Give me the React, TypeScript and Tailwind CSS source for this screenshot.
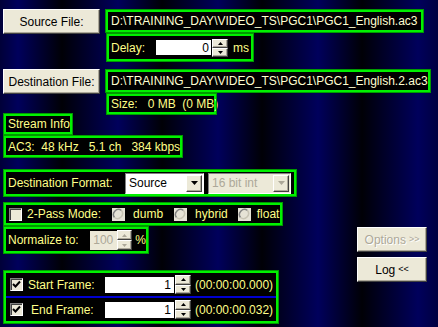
import type { ReactNode } from "react"

const box = "border-[3px] border-[#00f000] outline outline-[#009a00] outline-offset-[-1px] bg-black whitespace-nowrap"
const label = "text-[#ffff88]"
const raised =
  "bg-[#ece9d8] border border-t-white border-l-white border-r-[#404040] border-b-[#404040] shadow-[inset_-1px_-1px_0_#aca899]"

function Button({ children, disabled, className }: { children: ReactNode; disabled?: boolean; className?: string }) {
  return (
    <div
      className={`${raised} flex items-center justify-center h-[25px] whitespace-nowrap ${
        disabled ? "text-[#aca899] [text-shadow:1px_1px_0_#fff]" : "text-black"
      } ${className ?? ""}`}
    >
      {children}
    </div>
  )
}

function Tri({ gray }: { gray?: boolean }) {
  return (
    <svg width="7" height="4" viewBox="0 0 7 4">
      <path d="M0 0 L7 0 L3.5 4 Z" fill={gray ? "#aca899" : "#000"} />
    </svg>
  )
}

function Spin({ gray, h = 18 }: { gray?: boolean; h?: number }) {
  return (
    <div className="flex flex-col w-[16px]" style={{ height: h }}>
      <div className={`${raised} flex-1 flex items-center justify-center`}>
        <svg width="5" height="3" viewBox="0 0 5 3">
          <path d="M2.5 0 L5 3 L0 3 Z" fill={gray ? "#aca899" : "#000"} />
        </svg>
      </div>
      <div className={`${raised} flex-1 flex items-center justify-center`}>
        <svg width="5" height="3" viewBox="0 0 5 3">
          <path d="M0 0 L5 0 L2.5 3 Z" fill={gray ? "#aca899" : "#000"} />
        </svg>
      </div>
    </div>
  )
}

function Check({ checked }: { checked?: boolean }) {
  return (
    <div className="shrink-0 w-[13px] h-[13px] bg-[#ece9d8] border border-t-[#808080] border-l-[#808080] border-r-white border-b-white shadow-[inset_1px_1px_0_#404040] flex items-center justify-center">
      {checked && (
        <svg width="9" height="9" viewBox="0 0 9 9">
          <path d="M1 4 L3.5 6.5 L8 1.5" stroke="#000" strokeWidth="2" fill="none" />
        </svg>
      )}
    </div>
  )
}

function Radio() {
  return (
    <svg width="13" height="13" viewBox="0 0 13 13" className="block">
      <rect x="0" y="0" width="13" height="13" fill="#e6e3d6" />
      <path d="M9.5 2.5 A5 5 0 0 0 2.5 9.5" stroke="#808080" strokeWidth="1.5" fill="none" />
      <path d="M2.5 9.5 A5 5 0 0 0 9.5 2.5" stroke="#c8c4b4" strokeWidth="1.5" fill="none" />
    </svg>
  )
}

function Select({ value, disabled, w }: { value: string; disabled?: boolean; w: number }) {
  return (
    <div
      className={`flex items-center h-[21px] border border-t-[#808080] border-l-[#808080] border-r-white border-b-white ${
        disabled ? "bg-[#ece9d8] text-[#aca899]" : "bg-white text-black"
      }`}
      style={{ width: w }}
    >
      <span className="flex-1 pl-[3px]">{value}</span>
      <div className={`${raised} w-[16px] h-[17px] mr-[1px] flex items-center justify-center`}>
        <Tri gray={disabled} />
      </div>
    </div>
  )
}

export default function App() {
  return (
    <div
      className="w-[438px] h-[327px] overflow-hidden flex flex-col pl-[3px] text-[12px] leading-none bg-[linear-gradient(90deg,#000038_0px,#00005c_18px,#000006_62px,#00005c_118px,#000006_162px,#00005c_218px,#000006_262px,#00005c_318px,#000006_362px,#00005c_418px,#000040_438px)]"
      style={{ fontFamily: '"Liberation Sans", Arial, sans-serif' }}
    >
      {/* source */}
      <div className="flex items-start mt-[9px]">
        <Button className="w-[97px]">Source File:</Button>
        <div className="flex flex-col items-start ml-[5px]">
          <div className={`${box} w-[319px] h-[24px] flex items-center pl-[3px] text-[#ffffd0]`}>
            D:\TRAINING_DAY\VIDEO_TS\PGC1\PGC1_English.ac3
          </div>
          <div className={`${box} ml-[1px] w-[148px] h-[29px] flex items-center pl-[2px]`}>
            <span className={label}>Delay:</span>
            <div className="ml-[11px] w-[55px] h-[15px] bg-white flex items-center justify-end pr-[2px] text-black">0</div>
            <div className="ml-[1px]">
              <Spin />
            </div>
            <span className={`${label} ml-[5px]`}>ms</span>
          </div>
        </div>
      </div>

      {/* destination */}
      <div className="flex items-start mt-[7px]">
        <Button className="w-[97px]">Destination File:</Button>
        <div className="flex flex-col items-start ml-[5px]">
          <div className={`${box} w-[326px] h-[24px] flex items-center pl-[3px] text-[#ffffd0]`}>
            D:\TRAINING_DAY\VIDEO_TS\PGC1\PGC1_English.2.ac3
          </div>
          <div className={`${box} ml-[1px] w-[111px] h-[22px] flex items-center pl-[2px] whitespace-pre ${label}`}>
            {"Size:   0 MB  (0 MB)"}
          </div>
        </div>
      </div>

      {/* stream info */}
      <div className={`${box} -mt-[2px] w-[70px] h-[22px] flex items-center pl-[2px] ${label}`}>Stream Info</div>
      <div className={`${box} w-[180px] h-[23px] flex items-center pl-[2px] whitespace-pre ${label}`}>
        {"AC3:  48 kHz   5.1 ch   384 kbps"}
      </div>

      {/* format */}
      <div className={`${box} mt-[11px] w-[294px] h-[28px] flex items-center pl-[2px]`}>
        <span className={`${label} w-[117px]`}>Destination Format:</span>
        <Select value="Source" w={79} />
        <div className="ml-[4px]">
          <Select value="16 bit int" w={83} disabled />
        </div>
      </div>

      <div className="flex items-start">
        <div className="flex flex-col items-start">
          {/* 2-pass */}
          <div className={`${box} mt-[5px] w-[280px] h-[24px] flex items-center pl-[3px] ${label}`}>
            <Check />
            <span className="ml-[5px]">2-Pass Mode:</span>
            <span className="ml-[11px]">
              <Radio />
            </span>
            <span className="ml-[8px]">dumb</span>
            <span className="ml-[11px]">
              <Radio />
            </span>
            <span className="ml-[8px]">hybrid</span>
            <span className="ml-[10px]">
              <Radio />
            </span>
            <span className="ml-[6px]">float</span>
          </div>

          {/* normalize */}
          <div className={`${box} w-[146px] h-[28px] flex items-center pl-[2px] ${label}`}>
            <span>Normalize to:</span>
            <div className="ml-[11px] w-[28px] h-[19px] bg-[#ece9d8] flex items-center justify-center text-[#aca899]">100</div>
            <Spin gray h={20} />
            <span className="ml-[3px]">%</span>
          </div>

          {/* frames */}
          <div className={`${box} mt-[16px] w-[276px] h-[54px] flex flex-col ${label}`}>
            <div className="h-[23px] flex items-center pl-[4px]">
              <Check checked />
              <span className="ml-[5px] w-[77px]">Start Frame:</span>
              <div className="w-[69px] h-[16px] bg-white flex items-center justify-end pr-[3px] text-black">1</div>
              <div className="ml-[1px]">
                <Spin h={19} />
              </div>
              <span className="ml-[4px]">(00:00:00.000)</span>
            </div>
            <div className="h-[2px] bg-[#0000d0]" />
            <div className="h-[23px] flex items-center pl-[4px]">
              <Check checked />
              <span className="ml-[8px] w-[74px]">End Frame:</span>
              <div className="w-[69px] h-[16px] bg-white flex items-center justify-end pr-[3px] text-black">1</div>
              <div className="ml-[1px]">
                <Spin h={19} />
              </div>
              <span className="ml-[4px]">(00:00:00.032)</span>
            </div>
          </div>
        </div>

        <div className="ml-[74px] mt-[30px] flex flex-col gap-[5px]">
          <Button disabled className="w-[70px]">
            Options <span className="ml-[3px] text-[9px]">&gt;&gt;</span>
          </Button>
          <Button className="w-[70px]">
            Log <span className="ml-[3px] text-[9px]">&lt;&lt;</span>
          </Button>
        </div>
      </div>
    </div>
  )
}
